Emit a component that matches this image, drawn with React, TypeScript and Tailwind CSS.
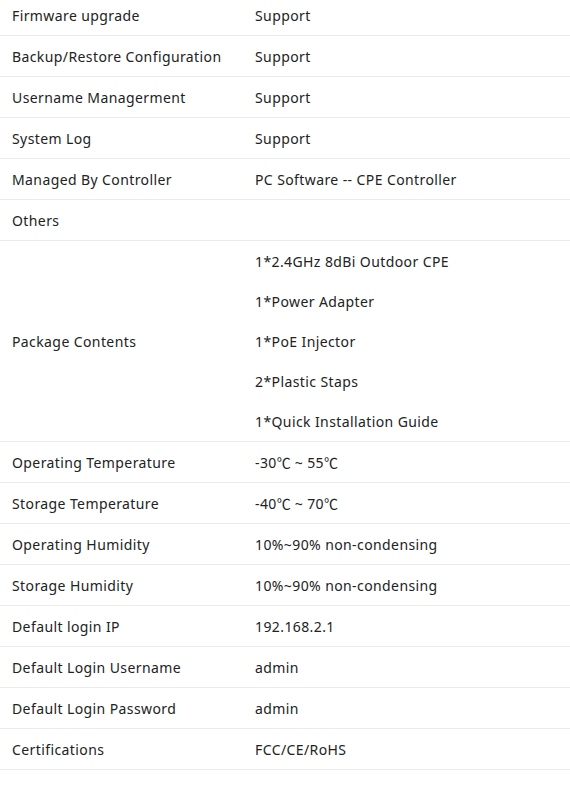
import React from "react";

const C = () => (
  <span style={{ fontFamily: '"Noto Sans CJK SC", sans-serif', letterSpacing: 0 }}>℃</span>
);

const rows: [string, React.ReactNode[]][] = [
  ["Firmware upgrade", ["Support"]],
  ["Backup/Restore Configuration", ["Support"]],
  ["Username Managerment", ["Support"]],
  ["System Log", ["Support"]],
  ["Managed By Controller", ["PC Software -- CPE Controller"]],
  ["Others", [""]],
  [
    "Package Contents",
    [
      "1*2.4GHz 8dBi Outdoor CPE",
      "1*Power Adapter",
      "1*PoE Injector",
      "2*Plastic Staps",
      "1*Quick Installation Guide",
    ],
  ],
  ["Operating Temperature", [<>-30<C /><span className="ml-[4px]">~ 55</span><C /></>]],
  ["Storage Temperature", [<>-40<C /><span className="ml-[4px]">~ 70</span><C /></>]],
  ["Operating Humidity", ["10%~90% non-condensing"]],
  ["Storage Humidity", ["10%~90% non-condensing"]],
  ["Default login IP", ["192.168.2.1"]],
  ["Default Login Username", ["admin"]],
  ["Default Login Password", ["admin"]],
  ["Certifications", ["FCC/CE/RoHS"]],
];

export default function App() {
  return (
    <div
      className="w-[570px] h-[791px] overflow-hidden bg-white text-[14px] tracking-[0.4px] text-[#222]"
      style={{ fontFamily: '"Noto Sans", sans-serif' }}
    >
      <div className="-mt-[5px] flex flex-col">
        {rows.map(([label, values], i) => (
          <div key={i} className="flex border-b border-[#ebebeb]">
            <div className="w-[255px] pl-[12px] flex items-center">{label}</div>
            <div className="flex-1 flex flex-col">
              {values.map((v, j) => (
                <div key={j} className="h-[40px] flex items-center whitespace-pre">
                  {v}
                </div>
              ))}
            </div>
          </div>
        ))}
      </div>
    </div>
  );
}
